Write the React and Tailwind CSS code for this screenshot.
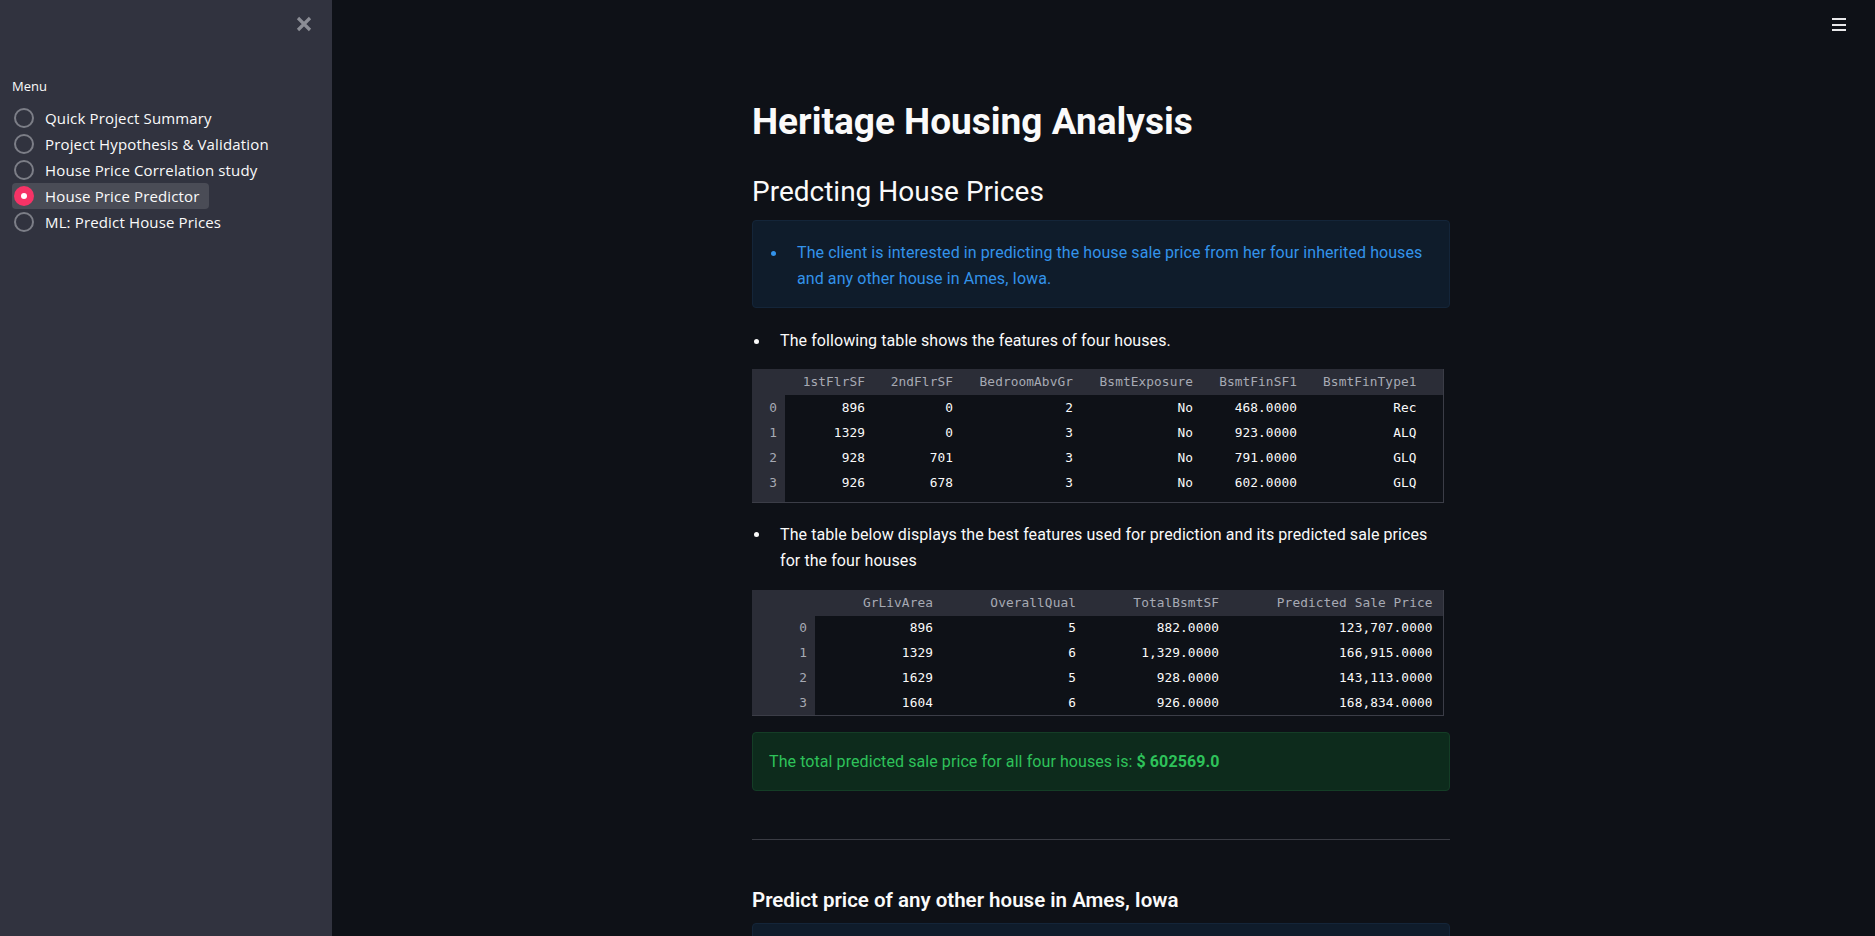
import React from "react";

const menu = [
  "Quick Project Summary",
  "Project Hypothesis & Validation",
  "House Price Correlation study",
  "House Price Predictor",
  "ML: Predict House Prices",
];

const table1 = {
  idxWidth: "w-[33px]",
  cols: [
    { name: "1stFlrSF", w: "w-[93px]", pr: "pr-[13px]" },
    { name: "2ndFlrSF", w: "w-[88px]", pr: "pr-[13px]" },
    { name: "BedroomAbvGr", w: "w-[120px]", pr: "pr-[13px]" },
    { name: "BsmtExposure", w: "w-[120px]", pr: "pr-[13px]" },
    { name: "BsmtFinSF1", w: "w-[104px]", pr: "pr-[13px]" },
    { name: "BsmtFinType1", w: "w-[133px]", pr: "pr-[26px]" },
  ],
  rows: [
    ["896", "0", "2", "No", "468.0000", "Rec"],
    ["1329", "0", "3", "No", "923.0000", "ALQ"],
    ["928", "701", "3", "No", "791.0000", "GLQ"],
    ["926", "678", "3", "No", "602.0000", "GLQ"],
  ],
  gutter: true,
};

const table2 = {
  idxWidth: "w-[63px]",
  cols: [
    { name: "GrLivArea", w: "w-[128px]", pr: "pr-[10px]" },
    { name: "OverallQual", w: "w-[143px]", pr: "pr-[10px]" },
    { name: "TotalBsmtSF", w: "w-[143px]", pr: "pr-[10px]" },
    { name: "Predicted Sale Price", w: "w-[214px]", pr: "pr-[10px]" },
  ],
  rows: [
    ["896", "5", "882.0000", "123,707.0000"],
    ["1329", "6", "1,329.0000", "166,915.0000"],
    ["1629", "5", "928.0000", "143,113.0000"],
    ["1604", "6", "926.0000", "168,834.0000"],
  ],
  gutter: false,
};

const DataTable = ({ data }) => (
  <table className="table-fixed border-collapse w-[691px] border-r border-b border-[#3b3d47] font-['DejaVu_Sans_Mono',monospace] text-[12.8px]">
    <colgroup>
      <col className={data.idxWidth} />
      {data.cols.map((c) => (
        <col key={c.name} className={c.w} />
      ))}
    </colgroup>
    <thead>
      <tr className="h-[26px] bg-[#2b2d37]">
        <th></th>
        {data.cols.map((c) => (
          <th
            key={c.name}
            className={`text-right font-normal text-[#a7aab4] whitespace-pre ${c.pr}`}
          >
            {c.name}
          </th>
        ))}
      </tr>
    </thead>
    <tbody>
      {data.rows.map((r, i) => (
        <tr key={i} className="h-[25px]">
          <td className="bg-[#2b2d37] text-right pr-[8px] text-[#a7aab4]">{i}</td>
          {r.map((v, j) => (
            <td key={j} className={`text-right text-[#fafafa] ${data.cols[j].pr}`}>
              {v}
            </td>
          ))}
        </tr>
      ))}
      {data.gutter ? (
        <tr className="h-[7px]">
          <td className="bg-[#2b2d37]"></td>
          <td colSpan={data.cols.length}></td>
        </tr>
      ) : null}
    </tbody>
  </table>
);

// markdown bullet: small dot, text indented 28px
const Bullet = ({ children, className = "", dot = "bg-[#fafafa]" }) => (
  <div className={`flex leading-[26px] ${className}`}>
    <div className="w-[28px] shrink-0 h-[26px] flex items-center pl-[2px]">
      <div className={`w-[5px] h-[5px] rounded-full ${dot}`}></div>
    </div>
    <div className="flex-1">{children}</div>
  </div>
);

export default function App() {
  return (
    <div className="flex h-[936px] w-full overflow-hidden bg-[#0e1117] text-[#fafafa]">
      {/* sidebar */}
      <div className="flex flex-col w-[332px] shrink-0 bg-[#31333f] font-['Open_Sans',sans-serif]">
        <div className="flex justify-end pt-[15px] pr-[19px]">
          <svg width="18" height="18" viewBox="0 0 18 18">
            <path d="M3 3 L15 15 M15 3 L3 15" stroke="#8b8d95" strokeWidth="3.2" strokeLinecap="butt" />
          </svg>
        </div>
        <div className="px-[12px] mt-[43px]">
          <div className="text-[13px] leading-[20px] text-[#fafafa]">Menu</div>
          <div className="flex flex-col mt-[9px]">
            {menu.map((m, i) => {
              const active = i === 3;
              return (
                <div key={m} className="flex">
                  <div
                    className={`flex items-center h-[26px] gap-[11px] pl-[2px] pr-[9px] rounded-[4px] ${
                      active ? "bg-[#4a4c56]" : ""
                    }`}
                  >
                    {active ? (
                      <div className="w-[20px] h-[20px] rounded-full bg-[#f63366] flex items-center justify-center">
                        <div className="w-[6px] h-[6px] rounded-full bg-white"></div>
                      </div>
                    ) : (
                      <div className="w-[20px] h-[20px] rounded-full border-2 border-[#7c7e87]"></div>
                    )}
                    <span className="text-[15px] tracking-[0.15px] text-[#fafafa] whitespace-nowrap">{m}</span>
                  </div>
                </div>
              );
            })}
          </div>
        </div>
      </div>

      {/* main */}
      <div className="relative flex-1 font-['Roboto',sans-serif]">
        <div className="absolute top-[18px] right-[29px] flex flex-col gap-[3.5px]">
          <div className="w-[14px] h-[2px] bg-[#e8e8ea]"></div>
          <div className="w-[14px] h-[2px] bg-[#e8e8ea]"></div>
          <div className="w-[14px] h-[2px] bg-[#e8e8ea]"></div>
        </div>

        <div className="ml-[420px] w-[698px] pt-[100px] flex flex-col text-[16px] tracking-[0.08px]">
          <h1 className="text-[37px] leading-[43px] font-bold tracking-normal">Heritage Housing Analysis</h1>
          <h2 className="mt-[32px] text-[28px] leading-[34px] font-normal tracking-normal">Predcting House Prices</h2>

          <div className="mt-[11px] rounded-[4px] border border-[#142539] bg-[#0f1c2b] pt-[19px] pb-[15px] pl-[16px] pr-[12px] text-[#3393ea]">
            <Bullet dot="bg-[#3393ea]">
              The client is interested in predicting the house sale price from her four inherited houses and any
              other house in Ames, Iowa.
            </Bullet>
          </div>

          <Bullet className="mt-[20px]">The following table shows the features of four houses.</Bullet>

          <div className="mt-[15px]">
            <DataTable data={table1} />
          </div>

          <Bullet className="mt-[19px]">
            The table below displays the best features used for prediction and its predicted sale prices for the
            four houses
          </Bullet>

          <div className="mt-[16px]">
            <DataTable data={table2} />
          </div>

          <div className="mt-[16px] rounded-[4px] border border-[#143d26] bg-[#0d2b1c] pt-[16px] pb-[15px] px-[16px] leading-[26px] text-[#2ec25a]">
            The total predicted sale price for all four houses is: <span className="font-bold">$ 602569.0</span>
          </div>

          <hr className="mt-[48px] border-0 h-[1px] bg-[#3a3c44]" />

          <h3 className="mt-[48px] text-[20.5px] leading-[24px] font-semibold tracking-normal">
            Predict price of any other house in Ames, Iowa
          </h3>

          <div className="mt-[11px] h-[60px] rounded-[4px] border border-[#142539] bg-[#0f1c2b]"></div>
        </div>
      </div>
    </div>
  );
}
